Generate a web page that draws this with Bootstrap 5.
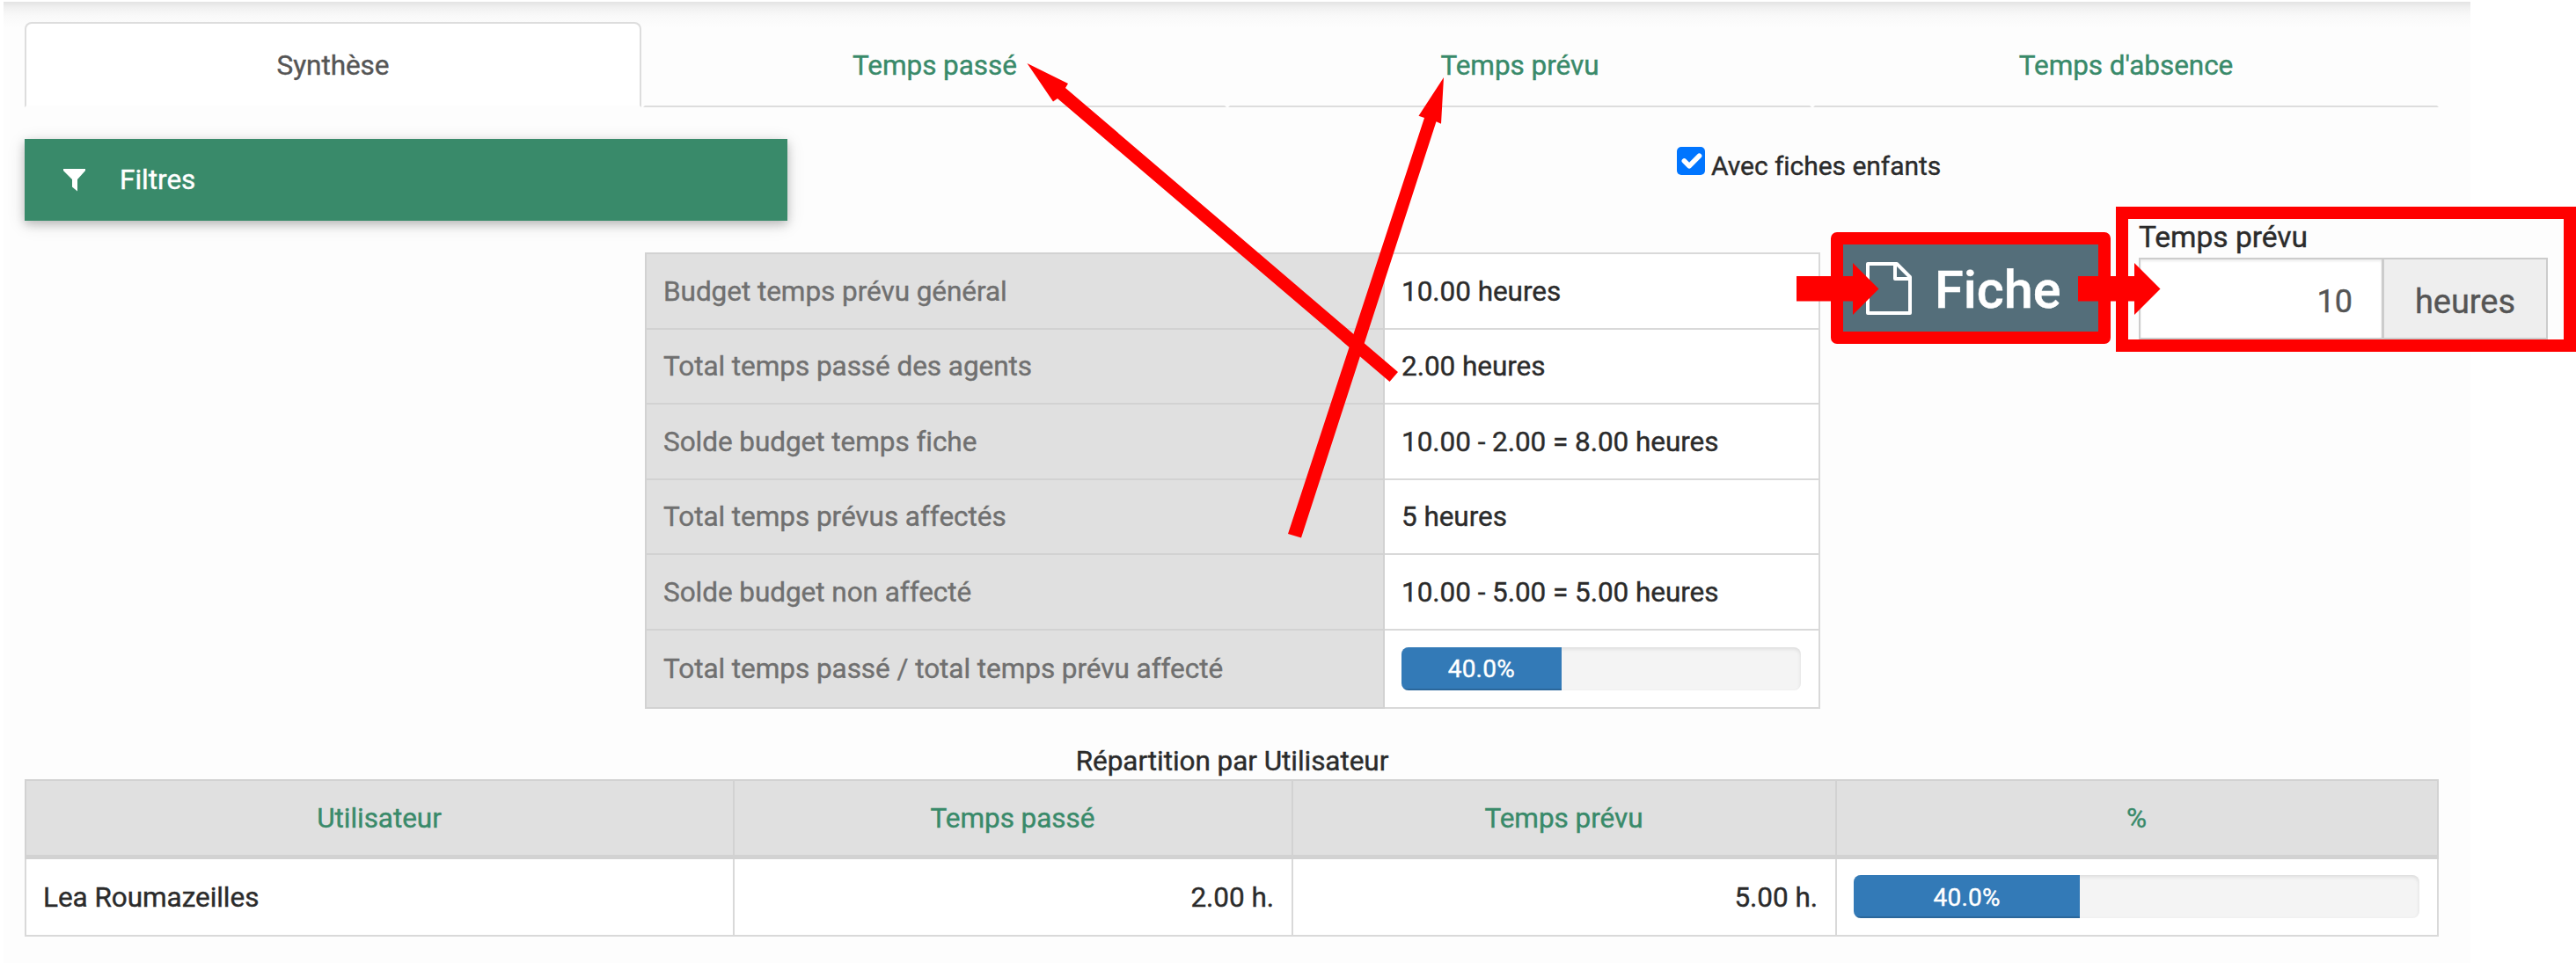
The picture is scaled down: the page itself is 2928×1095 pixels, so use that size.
<!DOCTYPE html>
<html lang="fr">
<head>
<meta charset="utf-8">
<title>Synthèse des temps</title>
<link rel="stylesheet" href="https://cdn.jsdelivr.net/npm/bootstrap@5.3.0/dist/css/bootstrap.min.css">
<style>
body{font-family:Roboto,"Liberation Sans",sans-serif;font-size:31.5px;line-height:44px;letter-spacing:-.05px;color:#2b2b2b;background:#fff;width:2928px;height:1095px;overflow:hidden;-webkit-text-stroke:.4px}
.page-panel{width:2804px;height:1093px;margin:2px 0 0 4px;padding:23px 36px 0 24px;background:linear-gradient(#e3e3e3,#f1f1f1 7px,#f9f9f9 16px,#fdfdfd 30px)}
.time-tabs{height:97px;border:0;gap:2px}
.time-tabs .nav-item{width:663px}
.time-tabs .nav-item:first-child{width:701px}
.time-tabs .nav-item:last-child{width:711px}
.time-tabs .nav-link{height:97px;margin:0;padding:26px 0 0;text-align:center;color:#398a6a;border:2px solid transparent;border-bottom-color:#ddd;border-radius:0;line-height:44px}
.time-tabs .nav-link.active{color:#555;background:#fff;border-color:#ddd #ddd transparent;border-radius:8px 8px 0 0;background-clip:padding-box}
.tool-row{height:165px;padding-top:36px}
.btn-filter{width:867px;height:93px;padding:0 0 0 44px;border:0;border-radius:0;background:#398a6a;color:#fff;font-size:31.5px;box-shadow:0 4px 10px rgba(0,0,0,.2),0 4px 20px rgba(0,0,0,.12)}
.btn-filter svg{width:26px;height:26px;margin-right:38px}
.btn-filter span{padding-top:1px}
.child-check{margin:9px 0 0 1011px;gap:7px;height:44px}
.child-check .form-check-input{width:32px;height:32px;border-radius:5px;margin:0;border:0;background-color:#0075ff;background-size:38px}
.child-check label{font-size:30px}
.table{--bs-table-bg:transparent;--bs-table-color:#2b2b2b;border-color:#ddd;table-layout:fixed;margin:0}
.table>:not(caption)>*>*{border-width:2px;border-color:#d9d9d9;padding:2px 20px 0 19px;vertical-align:middle;background:#fff}
.summary{width:1336px;margin-left:705px}
.summary tr{height:85.5px}
.summary tr:last-child{height:89px}
.table.summary>tbody>tr>th{background:#e0e0e0;color:#707070;font-weight:400;border-color:#d2d2d2}
.table>tbody>tr>td.bar-cell{padding-top:0}
.split-table{width:2744px}
.table.split-table>thead>tr>th{background:#e0e0e0;color:#398a6a;font-weight:400;text-align:center;height:88px;border-color:#d2d2d2;border-bottom-width:5px}
.table.split-table>tbody>tr>td{height:89px}
.progress{height:49px;border-radius:8px;background:#f4f4f4;box-shadow:inset 0 2px 4px rgba(0,0,0,.1)}
.progress-bar{background:#337ab7;font-size:28px;padding-top:2px;letter-spacing:.2px;box-shadow:inset 0 -2px 0 rgba(0,0,0,.15)}
.split-title{height:80px;padding-top:38px;width:2744px;text-indent:1px}
.note-layer{position:absolute;inset:0}
.fiche-note{position:absolute;left:2081px;top:264px;width:318px;height:127px;border:14px solid red;border-radius:7px;background:#546e7a;color:#fff;font-size:59.5px;font-weight:500;padding-left:26px}
.fiche-note svg{width:52px;height:60px;margin-right:26px}
.fiche-note span{padding-top:5px}
.input-note{position:absolute;left:2405px;top:235px;width:523px;height:165px;border:14px solid red;background:#fdfdfd;padding:0 17px 0 12px}
.input-note label{line-height:42px;height:44px;display:block;font-size:33.6px}
.input-note .input-group{width:465px;height:93px;flex-wrap:nowrap}
.input-note .form-control{width:278px;flex:none;border:2px solid #ccc;border-radius:0;padding:7px 33px 0 0;text-align:right;font-size:36px;color:#555;background:#fff;box-shadow:inset 0 2px 3px rgba(0,0,0,.08);font-family:inherit}
.input-note .input-group-text{flex:1;justify-content:center;border:2px solid #ccc;border-radius:0;background:#eee;color:#555;font-size:38px;padding:7px 0 0}
.arrows{position:absolute;inset:0;width:2928px;height:1095px}
</style>
<script src="https://cdn.jsdelivr.net/npm/bootstrap@5.3.0/dist/js/bootstrap.bundle.min.js"></script>
</head>
<body class="position-relative">
<main class="page-panel">
  <ul class="nav nav-tabs time-tabs flex-nowrap">
    <li class="nav-item"><a class="nav-link active" href="#">Synthèse</a></li>
    <li class="nav-item"><a class="nav-link" href="#">Temps passé</a></li>
    <li class="nav-item"><a class="nav-link" href="#">Temps prévu</a></li>
    <li class="nav-item"><a class="nav-link" href="#">Temps d'absence</a></li>
  </ul>
  <div class="tool-row d-flex align-items-start">
    <button class="btn btn-filter d-flex align-items-center text-start" type="button">
      <svg viewBox="0 0 26 26" fill="#fff"><path d="M0 0h25v2l-9 10v13.500l-6-5V12L0 2z"/></svg><span>Filtres</span>
    </button>
    <div class="child-check d-flex align-items-start">
      <input class="form-check-input" type="checkbox" id="enfants" checked>
      <label for="enfants">Avec fiches enfants</label>
    </div>
  </div>
  <table class="table table-bordered summary">
    <colgroup><col style="width:839px"><col></colgroup>
    <tbody>
      <tr><th>Budget temps prévu général</th><td>10.00 heures</td></tr>
      <tr><th>Total temps passé des agents</th><td>2.00 heures</td></tr>
      <tr><th>Solde budget temps fiche</th><td>10.00 - 2.00 = 8.00 heures</td></tr>
      <tr><th>Total temps prévus affectés</th><td>5 heures</td></tr>
      <tr><th>Solde budget non affecté</th><td>10.00 - 5.00 = 5.00 heures</td></tr>
      <tr><th>Total temps passé / total temps prévu affecté</th><td class="bar-cell"><div class="progress"><div class="progress-bar" style="width:40%">40.0%</div></div></td></tr>
    </tbody>
  </table>
  <div class="split-title text-center">Répartition par Utilisateur</div>
  <table class="table table-bordered split-table">
    <colgroup><col style="width:805px"><col style="width:635px"><col style="width:618px"><col></colgroup>
    <thead><tr><th>Utilisateur</th><th>Temps passé</th><th>Temps prévu</th><th>%</th></tr></thead>
    <tbody><tr><td>Lea Roumazeilles</td><td class="text-end">2.00 h.</td><td class="text-end">5.00 h.</td><td class="bar-cell"><div class="progress"><div class="progress-bar" style="width:40%">40.0%</div></div></td></tr></tbody>
  </table>
</main>
<div class="note-layer">
  <div class="fiche-note d-flex align-items-center">
    <svg viewBox="0 0 52 60" fill="none" stroke="#fff" stroke-width="4" stroke-linejoin="round"><path d="M2 2h33l15 15v41H2z"/><path d="M33 2v17h17"/></svg><span>Fiche</span>
  </div>
  <div class="input-note">
    <label for="prevu">Temps prévu</label>
    <div class="input-group"><input id="prevu" class="form-control" value="10"><span class="input-group-text">heures</span></div>
  </div>
  <svg class="arrows" viewBox="0 0 2928 1095" fill="red">
    <path d="M1167.500 72L1214 95L1211 100L1589 423L1579.500 434L1202 112L1197 115.500z"/>
    <path d="M1641 88L1612.500 131.700L1619 134L1464 607L1479 611.500L1632.500 138.300L1638 140.700z"/>
    <path d="M2042 314h64v-15l29.500 29.500L2106 358v-15.500h-64z"/>
    <path d="M2362 314h64v-15l29.500 29.500L2426 358v-15.500h-64z"/>
  </svg>
</div>
</body>
</html>
